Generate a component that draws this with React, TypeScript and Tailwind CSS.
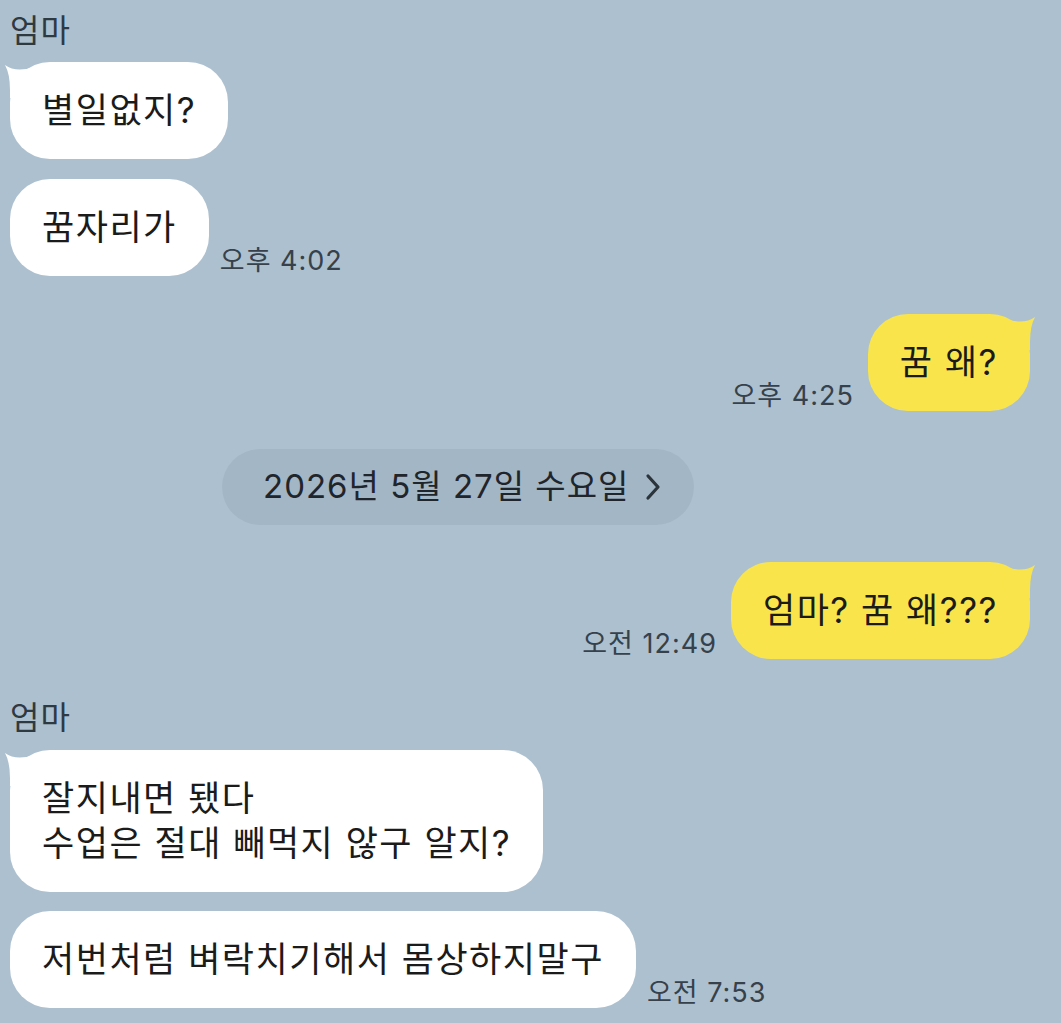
import React from 'react';

const FONT = 'Inter, "Noto Sans CJK KR", "Noto Sans", sans-serif';

const LeftTail = () => (
  <svg className="absolute left-[-6px] top-0" width="36" height="36" viewBox="0 0 36 36">
    <path d="M1 3 Q12 11 30 5 L36 36 L6 36 L6 28 Q6 12 1 3 Z" fill="#ffffff" />
  </svg>
);

const RightTail = () => (
  <svg className="absolute right-[-6px] top-0" width="36" height="36" viewBox="0 0 36 36">
    <path d="M35 3 Q24 11 6 5 L0 36 L30 36 L30 28 Q30 12 35 3 Z" fill="#f9e54b" />
  </svg>
);

const Time = ({ children }: { children: React.ReactNode }) => (
  <span className="shrink-0 text-[27px] leading-[30px] tracking-[1px] text-[#36414c]">{children}</span>
);

const Bubble = ({
  children,
  mine = false,
  tail = false,
}: {
  children: React.ReactNode;
  mine?: boolean;
  tail?: boolean;
}) => (
  <div
    className={`relative rounded-[40px] px-[32px] py-[26px] text-[35px] leading-[45px] tracking-[1.5px] text-[#1b1b1b] ${
      mine ? 'bg-[#f9e54b]' : 'bg-white'
    }`}
  >
    {tail && (mine ? <RightTail /> : <LeftTail />)}
    <span className="relative">{children}</span>
  </div>
);

const Name = ({ className = '' }: { className?: string }) => (
  <div className={`h-[40px] text-[32px] leading-[40px] tracking-[1px] text-[#2f3942] ${className}`}>엄마</div>
);

export default function App() {
  return (
    <div className="min-h-screen w-full bg-[#adc0cf]" style={{ fontFamily: FONT }}>
      <div className="flex flex-col pl-[10px] pr-[31px] pb-[11px]">
        <Name className="mt-[11px]" />

        <div className="mt-[11px] flex">
          <Bubble tail>별일없지?</Bubble>
        </div>

        <div className="mt-[20px] flex items-end gap-[11px]">
          <Bubble>꿈자리가</Bubble>
          <Time>오후 4:02</Time>
        </div>

        <div className="mt-[38px] flex items-end justify-end gap-[14px]">
          <Time>오후 4:25</Time>
          <Bubble mine tail>꿈 왜?</Bubble>
        </div>

        <div className="mt-[38px] flex">
          <div className="ml-[212px] flex h-[76px] items-center gap-[16px] rounded-full bg-[#a3b6c6] pl-[41px] pr-[33px] text-[33px] tracking-[1px] text-[#1f252b]">
            <span>2026년 5월 27일 수요일</span>
            <svg width="16" height="28" viewBox="0 0 16 28" fill="none">
              <path d="M3 3 L13 14 L3 25" stroke="#2b333b" strokeWidth="3.2" strokeLinecap="round" strokeLinejoin="round" />
            </svg>
          </div>
        </div>

        <div className="mt-[37px] flex items-end justify-end gap-[14px]">
          <Time>오전 12:49</Time>
          <Bubble mine tail>엄마? 꿈 왜???</Bubble>
        </div>

        <Name className="mt-[39px]" />

        <div className="mt-[12px] flex">
          <Bubble tail>
            잘지내면 됐다
            <br />
            수업은 절대 빼먹지 않구 알지?
          </Bubble>
        </div>

        <div className="mt-[19px] flex items-end gap-[11px]">
          <Bubble>저번처럼 벼락치기해서 몸상하지말구</Bubble>
          <Time>오전 7:53</Time>
        </div>
      </div>
    </div>
  );
}
